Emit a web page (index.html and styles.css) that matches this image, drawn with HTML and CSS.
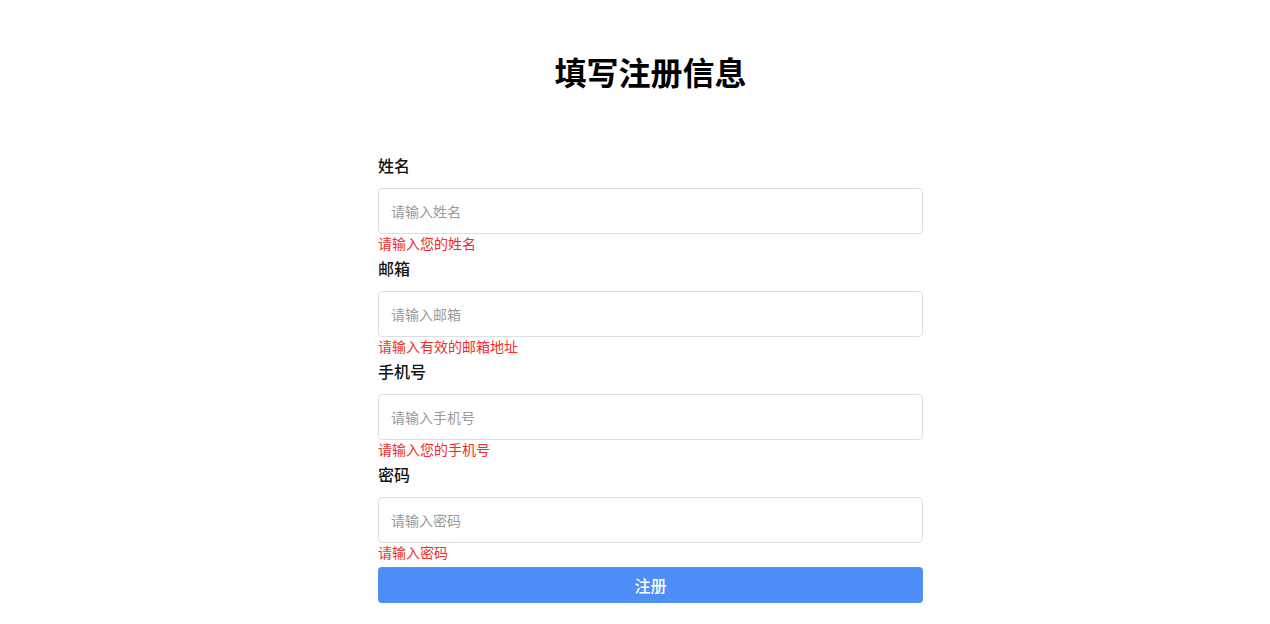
FILE: index.html
```html
<!DOCTYPE html>
<html lang="zh-CN">
<head>
<meta charset="utf-8">
<title>注册</title>
<link rel="stylesheet" href="styles.css">
</head>
<body>
<main class="page">
  <h1 class="title">填写注册信息</h1>
  <form class="form">
    <div class="field">
      <label class="label">姓名</label>
      <input class="input" type="text" placeholder="请输入姓名">
      <div class="error">请输入您的姓名</div>
    </div>
    <div class="field">
      <label class="label">邮箱</label>
      <input class="input" type="text" placeholder="请输入邮箱">
      <div class="error">请输入有效的邮箱地址</div>
    </div>
    <div class="field">
      <label class="label">手机号</label>
      <input class="input" type="text" placeholder="请输入手机号">
      <div class="error">请输入您的手机号</div>
    </div>
    <div class="field">
      <label class="label">密码</label>
      <input class="input" type="password" placeholder="请输入密码">
      <div class="error">请输入密码</div>
    </div>
    <button class="submit" type="button">注册</button>
  </form>
</main>
</body>
</html>
```
FILE: styles.css
```css
* { box-sizing: border-box; }
html, body { margin: 0; padding: 0; background: #fff; }
body {
  font-family: "Noto Sans CJK SC", "Noto Sans", sans-serif;
  color: #1a1a1a;
}
.page {
  display: flex;
  flex-direction: column;
  align-items: center;
  padding-left: 31px;
}
.title {
  margin: 48px 0 0;
  font-size: 32px;
  line-height: 46px;
  font-weight: 700;
  color: #000;
}
.form {
  width: 545px;
  margin-top: 60px;
  display: flex;
  flex-direction: column;
  gap: 5px;
}
.field {
  display: flex;
  flex-direction: column;
}
.label {
  font-size: 16px;
  line-height: 22px;
  margin-bottom: 12px;
  font-weight: 500;
  color: #111;
}
.input {
  height: 46px;
  border: 1px solid #dcdfe6;
  border-radius: 4px;
  padding: 0 12px;
  font-family: inherit;
  font-size: 14px;
  color: #333;
  outline: none;
}
.input::placeholder { color: #9a9a9a; }
.error {
  font-size: 14px;
  line-height: 18px;
  color: #f02d2d;
}
.submit {
  height: 36px;
  margin-top: 1px;
  border: none;
  border-radius: 4px;
  background: #4d8ef8;
  color: #fff;
  font-family: inherit;
  font-size: 16px;
  font-weight: 500;
  cursor: pointer;
}
```
